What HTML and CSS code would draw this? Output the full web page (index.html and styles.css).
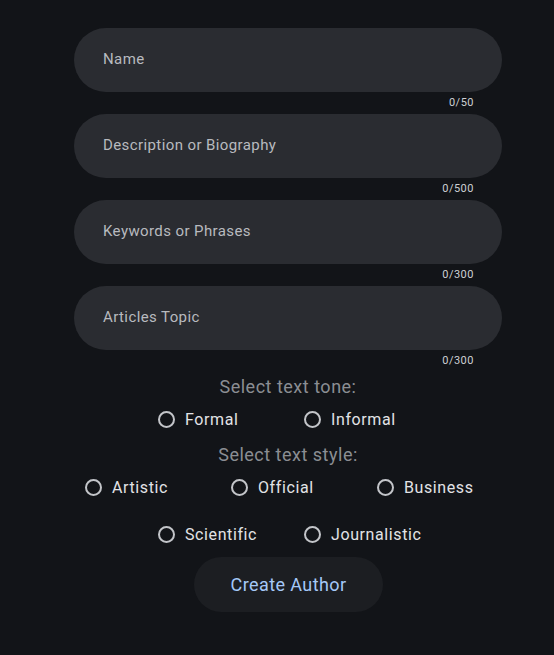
FILE: index.html
```html
<!DOCTYPE html>
<html lang="en">
<head>
<meta charset="utf-8">
<title>Create Author</title>
<link rel="stylesheet" href="styles.css">
</head>
<body>
<main class="page">
  <form class="form">
    <div class="field-block">
      <div class="field"><span class="field-label">Name</span></div>
      <div class="counter">0/50</div>
    </div>
    <div class="field-block">
      <div class="field"><span class="field-label">Description or Biography</span></div>
      <div class="counter">0/500</div>
    </div>
    <div class="field-block">
      <div class="field"><span class="field-label">Keywords or Phrases</span></div>
      <div class="counter">0/300</div>
    </div>
    <div class="field-block">
      <div class="field"><span class="field-label">Articles Topic</span></div>
      <div class="counter">0/300</div>
    </div>

    <h2 class="group-title first">Select text tone:</h2>
    <div class="radio-group">
      <label class="radio"><span class="radio-box"><span class="radio-circle"></span></span><span class="radio-text">Formal</span></label>
      <label class="radio"><span class="radio-box"><span class="radio-circle"></span></span><span class="radio-text">Informal</span></label>
    </div>

    <h2 class="group-title">Select text style:</h2>
    <div class="radio-group">
      <label class="radio"><span class="radio-box"><span class="radio-circle"></span></span><span class="radio-text">Artistic</span></label>
      <label class="radio"><span class="radio-box"><span class="radio-circle"></span></span><span class="radio-text">Official</span></label>
      <label class="radio"><span class="radio-box"><span class="radio-circle"></span></span><span class="radio-text">Business</span></label>
      <label class="radio"><span class="radio-box"><span class="radio-circle"></span></span><span class="radio-text">Scientific</span></label>
      <label class="radio"><span class="radio-box"><span class="radio-circle"></span></span><span class="radio-text">Journalistic</span></label>
    </div>

    <div class="actions">
      <button type="button" class="btn">Create Author</button>
    </div>
  </form>
</main>
</body>
</html>
```
FILE: styles.css
```css
* { box-sizing: border-box; }

html, body {
  margin: 0;
  padding: 0;
  background: #121418;
  font-family: Roboto, "Noto Sans", "Liberation Sans", sans-serif;
  height: 100%;
}

.page {
  padding: 28px 52px 0 74px;
}

.form {
  width: 428px;
  display: flex;
  flex-direction: column;
}

.field-block {
  display: flex;
  flex-direction: column;
}

.field {
  height: 64px;
  border-radius: 32px;
  background: #2a2c31;
  display: flex;
  align-items: center;
  padding: 0 28px 2px 29px;
}

.field-label {
  color: #b8babf;
  font-size: 15px;
  font-weight: 400;
  letter-spacing: 0.4px;
}

.counter {
  height: 22px;
  line-height: 22px;
  text-align: right;
  padding-right: 28px;
  color: #cdd0d4;
  font-size: 11px;
  font-weight: 400;
  letter-spacing: 0.5px;
}

.group-title {
  margin: 4px 0 0;
  height: 24px;
  line-height: 24px;
  text-align: center;
  font-size: 18px;
  font-weight: 400;
  letter-spacing: 0.5px;
  color: #8b8e93;
}

.group-title.first {
  margin-top: 3px;
}

.radio-group {
  width: 438px;
  margin-left: -1px;
  display: flex;
  flex-wrap: wrap;
  justify-content: center;
  row-gap: 7px;
}

.radio {
  width: 146px;
  height: 40px;
  display: flex;
  align-items: center;
}

.radio-box {
  width: 40px;
  height: 40px;
  display: flex;
  align-items: center;
  justify-content: center;
  flex: none;
}

.radio-circle {
  width: 17px;
  height: 17px;
  border: 2px solid #c3c5c9;
  border-radius: 50%;
}

.radio-text {
  margin-left: -1px;
  color: #e2e3e6;
  font-size: 16px;
  letter-spacing: 0.6px;
}

.actions {
  display: flex;
  justify-content: center;
  margin-top: 3px;
}

.btn {
  width: 189px;
  height: 55px;
  border: none;
  border-radius: 28px;
  background: #1c1e22;
  color: #a5c8f7;
  font-family: Roboto, "Noto Sans", "Liberation Sans", sans-serif;
  font-size: 18px;
  letter-spacing: 0.4px;
  padding: 0;
  margin-left: 1px;
}
```
